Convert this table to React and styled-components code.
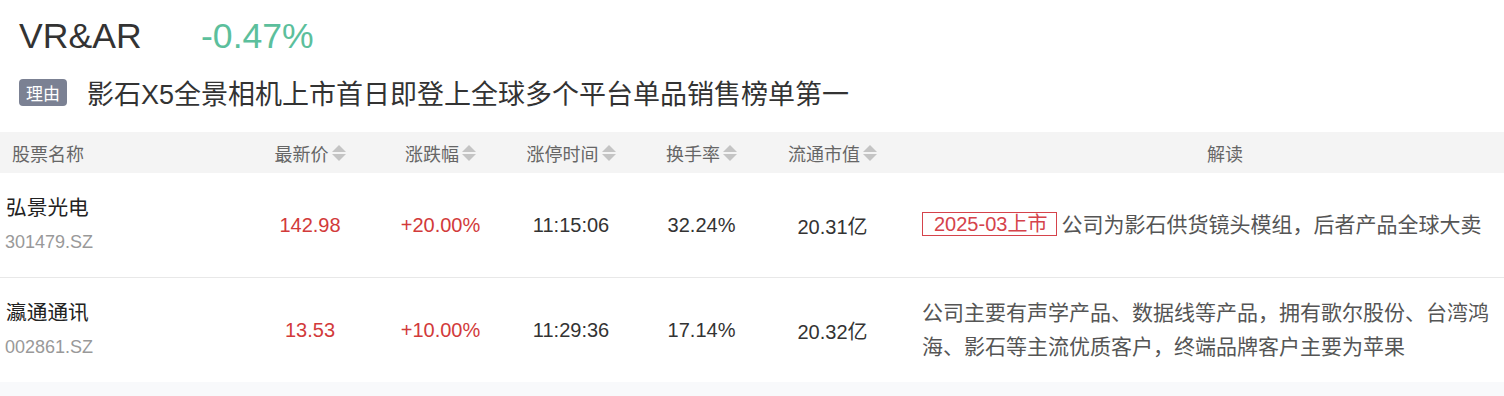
import React from 'react';
import styled, { createGlobalStyle } from 'styled-components';

const GlobalStyle = createGlobalStyle`
  html, body {
    margin: 0;
    padding: 0;
    background: #f8f9fb;
  }
  body {
    font-family: "Liberation Sans", "Noto Sans CJK SC", sans-serif;
  }
`;

const Page = styled.div`
  background: #fff;
`;

const Top = styled.div`
  padding: 12px 0 20px 19px;
`;

const TitleRow = styled.div`
  display: flex;
  align-items: center;
  height: 48px;
  font-size: 35.6px;
`;

const Name = styled.span`
  color: #333;
  width: 182px;
`;

const Change = styled.span`
  color: #5cbf9c;
`;

const ReasonRow = styled.div`
  display: flex;
  align-items: center;
  gap: 20px;
  height: 40px;
  margin-top: 12px;
`;

const Tag = styled.span`
  display: inline-flex;
  align-items: center;
  justify-content: center;
  width: 48px;
  height: 27px;
  border-radius: 4px;
  background: #7b8193;
  color: #fff;
  font-size: 17px;
`;

const Reason = styled.span`
  font-size: 27px;
  color: #333;
`;

const cols = '245px 130px 131px 130px 131px 131px 1fr';

const HeadRow = styled.div`
  display: grid;
  grid-template-columns: ${cols};
  height: 41px;
  background: #f4f4f4;
  align-items: center;
  font-size: 18px;
  color: #666;
`;

const HeadCell = styled.div`
  display: flex;
  align-items: center;
  justify-content: ${p => (p.$left ? 'flex-start' : 'center')};
  padding-left: ${p => p.$pad || 0}px;
`;

const Sorter = styled.span`
  display: inline-flex;
  flex-direction: column;
  gap: 2px;
  margin-left: 3px;
  &::before,
  &::after {
    content: '';
    width: 0;
    height: 0;
    border-left: 7px solid transparent;
    border-right: 7px solid transparent;
  }
  &::before {
    border-bottom: 7px solid #c4c4c4;
  }
  &::after {
    border-top: 7px solid #c4c4c4;
  }
`;

const Row = styled.div`
  display: grid;
  grid-template-columns: ${cols};
  align-items: center;
  padding: 18px 0;
  border-bottom: ${p => (p.$last ? 'none' : '1px solid #e8e8e8')};
  min-height: 68px;
`;

const StockCell = styled.div`
  padding-left: 6px;
  line-height: 34px;
`;

const StockName = styled.div`
  font-size: 20.7px;
  color: #222;
`;

const StockCode = styled.div`
  font-size: 18px;
  color: #999;
  margin-left: -1px;
`;

const Value = styled.div`
  text-align: center;
  font-size: 20px;
  color: ${p => (p.$up ? '#d23a3a' : '#333')};
`;

const Interp = styled.div`
  padding: 0 12px 0 24px;
  font-size: 21px;
  line-height: 34px;
  color: #555;
`;

const Badge = styled.span`
  display: inline-block;
  height: 22px;
  line-height: 22px;
  padding: 0 9px 0 11px;
  margin-right: 4px;
  border: 1px solid #d5434b;
  color: #d5434b;
  font-size: 20px;
  vertical-align: middle;
  position: relative;
  top: -2px;
`;

const headers = [
  { label: '股票名称', left: true, pad: 12 },
  { label: '最新价', sort: true },
  { label: '涨跌幅', sort: true },
  { label: '涨停时间', sort: true },
  { label: '换手率', sort: true },
  { label: '流通市值', sort: true },
  { label: '解读', pad: 48 },
];

const rows = [
  {
    name: '弘景光电',
    code: '301479.SZ',
    price: '142.98',
    pct: '+20.00%',
    time: '11:15:06',
    turnover: '32.24%',
    cap: '20.31亿',
    badge: '2025-03上市',
    text: '公司为影石供货镜头模组，后者产品全球大卖',
  },
  {
    name: '瀛通通讯',
    code: '002861.SZ',
    price: '13.53',
    pct: '+10.00%',
    time: '11:29:36',
    turnover: '17.14%',
    cap: '20.32亿',
    text: '公司主要有声学产品、数据线等产品，拥有歌尔股份、台湾鸿海、影石等主流优质客户，终端品牌客户主要为苹果',
  },
];

export default function App() {
  return (
    <>
      <GlobalStyle />
      <Page>
        <Top>
          <TitleRow>
            <Name>VR&amp;AR</Name>
            <Change>-0.47%</Change>
          </TitleRow>
          <ReasonRow>
            <Tag>理由</Tag>
            <Reason>影石X5全景相机上市首日即登上全球多个平台单品销售榜单第一</Reason>
          </ReasonRow>
        </Top>
        <HeadRow>
          {headers.map(h => (
            <HeadCell key={h.label} $left={h.left} $pad={h.pad}>
              {h.label}
              {h.sort && <Sorter />}
            </HeadCell>
          ))}
        </HeadRow>
        {rows.map((r, i) => (
          <Row key={r.code} $last={i === rows.length - 1}>
            <StockCell>
              <StockName>{r.name}</StockName>
              <StockCode>{r.code}</StockCode>
            </StockCell>
            <Value $up>{r.price}</Value>
            <Value $up>{r.pct}</Value>
            <Value>{r.time}</Value>
            <Value>{r.turnover}</Value>
            <Value>{r.cap}</Value>
            <Interp>
              {r.badge && <Badge>{r.badge}</Badge>}
              {r.text}
            </Interp>
          </Row>
        ))}
      </Page>
    </>
  );
}
